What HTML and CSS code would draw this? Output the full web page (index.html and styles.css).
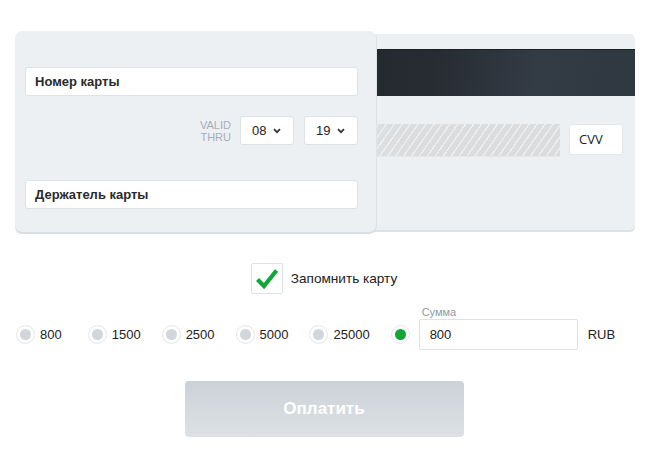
FILE: index.html
```html
<!DOCTYPE html>
<html lang="ru">
<head>
<meta charset="utf-8">
<title>Оплата</title>
<link rel="stylesheet" href="styles.css">
</head>
<body>
<div class="page">
  <div class="cards">
    <div class="card-front">
      <div class="field">Номер карты</div>
      <div class="valid-row">
        <div class="valid-label">VALID<br>THRU</div>
        <div class="select"><span>08</span><svg class="chev" width="8" height="6" viewBox="0 0 8 6"><path d="M1 1.2 L4 4.2 L7 1.2" fill="none" stroke="#333" stroke-width="1.8"/></svg></div>
        <div class="select"><span>19</span><svg class="chev" width="8" height="6" viewBox="0 0 8 6"><path d="M1 1.2 L4 4.2 L7 1.2" fill="none" stroke="#333" stroke-width="1.8"/></svg></div>
      </div>
      <div class="field holder">Держатель карты</div>
    </div>
    <div class="card-back">
      <div class="stripe"></div>
      <div class="sign-row">
        <div class="signature"></div>
        <div class="cvv">CVV</div>
      </div>
    </div>
  </div>

  <div class="remember">
    <div class="checkbox"><svg width="24" height="22" viewBox="0 0 24 22"><path d="M2.5 11.5 L9 18 L21.5 2.5" fill="none" stroke="#13a538" stroke-width="4.2" stroke-linejoin="miter"/></svg></div>
    <span class="remember-label">Запомнить карту</span>
  </div>

  <div class="amounts">
    <label class="amount"><span class="radio"></span>800</label>
    <label class="amount"><span class="radio"></span>1500</label>
    <label class="amount"><span class="radio"></span>2500</label>
    <label class="amount"><span class="radio"></span>5000</label>
    <label class="amount"><span class="radio"></span>25000</label>
    <div class="custom">
      <span class="radio checked"></span>
      <div class="sum">
        <div class="sum-label">Сумма</div>
        <div class="sum-input">800</div>
      </div>
      <span class="currency">RUB</span>
    </div>
  </div>

  <div class="actions">
    <button class="pay">Оплатить</button>
  </div>
</div>
</body>
</html>
```

FILE: styles.css
```css
html, body {
  margin: 0;
  padding: 0;
  background: #ffffff;
}
body {
  font-family: "Liberation Sans", Arial, sans-serif;
  color: #222;
  font-size: 13px;
}
.page {
  width: 648px;
  height: 461px;
  overflow: hidden;
}
.cards {
  display: flex;
  align-items: flex-start;
  padding: 31px 0 0 15px;
}
.card-front {
  position: relative;
  z-index: 2;
  width: 361px;
  height: 201px;
  box-sizing: border-box;
  background: #edf0f3;
  border-radius: 7px;
  box-shadow: 0 2px 0 #d9dee2, 1px 1px 0 #dde2e6;
  padding: 36px 18px 0 10px;
  display: flex;
  flex-direction: column;
}
.field {
  height: 29px;
  box-sizing: border-box;
  background: #fff;
  border: 1px solid #dde2e7;
  border-radius: 3px;
  padding: 0 9px;
  display: flex;
  align-items: center;
  font-weight: bold;
  font-size: 13px;
  color: #2a2a2a;
}
.valid-row {
  margin-top: 20px;
  display: flex;
  justify-content: flex-end;
  align-items: center;
  gap: 10px;
}
.valid-label {
  font-size: 11px;
  line-height: 12px;
  color: #a5aeb6;
  text-align: right;
  margin-right: -1px;
}
.select {
  width: 54px;
  height: 29px;
  box-sizing: border-box;
  background: #fff;
  border: 1px solid #dde2e7;
  border-radius: 3px;
  display: flex;
  align-items: center;
  padding-left: 11px;
  gap: 7px;
  font-size: 13px;
  color: #222;
}
.chev { display: block; }
.holder {
  margin-top: 35px;
}
.card-back {
  margin-left: -76px;
  margin-top: 3px;
  width: 335px;
  height: 196px;
  background: #edf0f3;
  border-radius: 5px;
  box-shadow: 0 2px 0 #dde2e6;
  padding-top: 15px;
  box-sizing: border-box;
}
.stripe {
  height: 47px;
  background: linear-gradient(100deg, #22262c 0%, #272c33 40%, #333b45 70%, #2f3740 100%);
  border-top: 1px solid #1b1e22;
  box-sizing: border-box;
}
.sign-row {
  margin-top: 28px;
  display: flex;
  gap: 9px;
}
.signature {
  width: 260px;
  height: 32px;
  background-color: #dcdddf;
  background-image:
    repeating-linear-gradient(125deg, rgba(255,255,255,0) 0px, rgba(255,255,255,0) 5px, rgba(235,240,245,0.9) 5px, rgba(235,240,245,0.9) 6.5px),
    linear-gradient(90deg, #dbe6ee 0%, #dcdcdc 40%, #dcdcdc 100%);
  border-bottom: 1px solid #e6e8ea;
}
.cvv {
  width: 54px;
  height: 31px;
  box-sizing: border-box;
  background: #fff;
  border: 1px solid #e3e7ea;
  border-radius: 3px;
  padding: 5px 0 0 9px;
  font-family: "Open Sans", sans-serif;
  font-size: 13px;
  color: #222;
}
.remember {
  margin-top: 31px;
  display: flex;
  justify-content: center;
  align-items: center;
  gap: 8px;
}
.checkbox {
  width: 32px;
  height: 31px;
  box-sizing: border-box;
  border: 1px solid #dde2e6;
  border-radius: 2px;
  display: flex;
  align-items: center;
  justify-content: center;
  background: #fff;
}
.remember-label {
  font-size: 13.6px;
  color: #222;
}
.amounts {
  margin-top: 12px;
  padding-left: 16px;
  display: flex;
  align-items: flex-end;
  gap: 21px;
}
.amount {
  display: flex;
  align-items: center;
  gap: 5px;
  height: 31px;
  font-size: 13px;
  color: #222;
}
.amount:first-child { margin-right: 5px; }
.radio {
  width: 19px;
  height: 19px;
  box-sizing: border-box;
  border: 1px solid #e3e6ea;
  border-radius: 50%;
  background: #fff;
  display: flex;
  align-items: center;
  justify-content: center;
}
.radio::after {
  content: "";
  width: 11px;
  height: 11px;
  border-radius: 50%;
  background: #d0d6db;
}
.radio.checked::after {
  background: #13a538;
}
.custom {
  display: flex;
  align-items: flex-end;
}
.custom .radio {
  margin-bottom: 6px;
}
.sum {
  margin-left: 9px;
  display: flex;
  flex-direction: column;
}
.sum-label {
  font-size: 11px;
  color: #8d99a4;
  padding-left: 3px;
  line-height: 12px;
  margin-bottom: 1px;
}
.sum-input {
  width: 159px;
  height: 31px;
  box-sizing: border-box;
  border: 1px solid #dde2e6;
  border-radius: 2px;
  background: #fff;
  padding-left: 10px;
  display: flex;
  align-items: center;
  font-size: 13px;
  color: #222;
}
.currency {
  margin-left: 10px;
  height: 31px;
  display: flex;
  align-items: center;
  font-size: 13px;
  color: #222;
}
.actions {
  margin-top: 31px;
  display: flex;
  justify-content: center;
}
.pay {
  width: 279px;
  height: 56px;
  border: none;
  border-radius: 4px;
  background: linear-gradient(180deg, #cbd2d7 0%, #dde1e5 100%);
  color: #fff;
  font-family: "Liberation Sans", Arial, sans-serif;
  font-weight: bold;
  font-size: 17px;
  padding: 0;
}
```
